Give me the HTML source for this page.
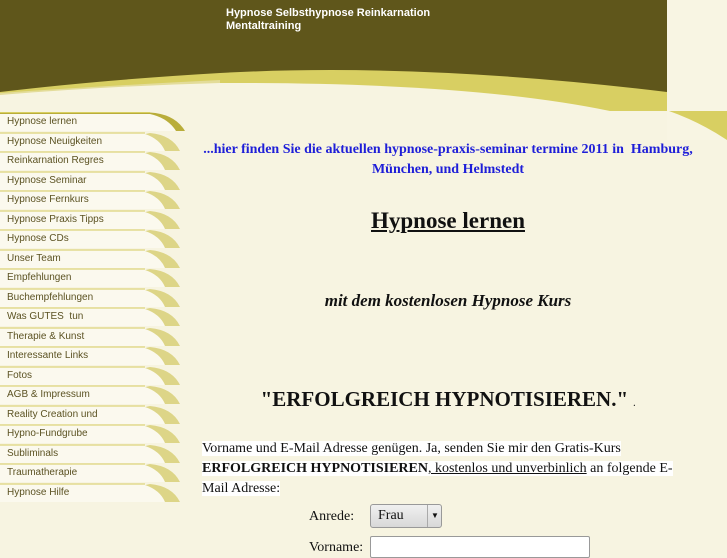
<!DOCTYPE html>
<html><head><meta charset="utf-8"><style>
body{margin:0;width:727px;height:545px;overflow:hidden;background:#f7f4e1;position:relative;font-family:"Liberation Serif",serif}
.hdr{position:absolute;left:0;top:0}
.nav{position:absolute;left:0;top:112px;width:190px}
.it{position:relative;height:19.5px;font:10px "Liberation Sans",sans-serif;color:#5b5222}
.it svg{position:absolute;left:0;top:0}
.it span{position:absolute;left:7px;top:4px}
.ab{position:absolute;font-weight:bold;color:#1e1ed8;font-size:14px;text-align:center;width:520px;left:188px;line-height:20px}
</style></head><body>
<svg class="hdr" width="727" height="140" viewBox="0 0 727 140">
<rect x="0" y="0" width="667" height="111" fill="#5f561b"/>
<rect x="667" y="0" width="60" height="140" fill="#f8f5e3"/>
<path d="M0 92 Q100 80 220 73 Q420 62 667 92 L667 111 L0 111Z" fill="#d8cf62"/>
<path d="M0 93 Q100 86 220 80 L220 111 L0 111Z" fill="#e3dc9a"/>
<path d="M0 95 Q110 86 220 83 Q470 82 610 111 L0 111Z" fill="#f7f4e1"/>
<path d="M669 111 L727 111 L727 140 Q700 122 669 111Z" fill="#d8cf62"/>
</svg>
<div style="position:absolute;left:226px;top:7px;font:bold 11px 'Liberation Sans',sans-serif;color:#fff;line-height:13px">Hypnose Selbsthypnose Reinkarnation<br>Mentaltraining</div>
<div class="nav">
<div class="it"><svg width="190" height="20"><path d="M0 0.5H150Q175 2 185 19H0Z" fill="#fbf9ee"/><path d="M0 0.5H150Q175 2 185 19H176Q168 6 150 2H0Z" fill="#b9ad3a"/><path d="M0 0.5H150" stroke="#d8cf62"/></svg><span>Hypnose lernen</span></div>
<div class="it"><svg width="190" height="20"><path d="M0 1H145Q170 3 180 19H0Z" fill="#fbf9ee"/><path d="M150 1Q172 3 180 19H165Q160 7 145 2Z" fill="#ddd587"/><path d="M0 1H145" stroke="#e2da8e" stroke-width="1.5"/></svg><span>Hypnose Neuigkeiten</span></div>
<div class="it"><svg width="190" height="20"><path d="M0 1H145Q170 3 180 19H0Z" fill="#fbf9ee"/><path d="M150 1Q172 3 180 19H165Q160 7 145 2Z" fill="#ddd587"/><path d="M0 1H145" stroke="#e2da8e" stroke-width="1.5"/></svg><span>Reinkarnation Regres</span></div>
<div class="it"><svg width="190" height="20"><path d="M0 1H145Q170 3 180 19H0Z" fill="#fbf9ee"/><path d="M150 1Q172 3 180 19H165Q160 7 145 2Z" fill="#ddd587"/><path d="M0 1H145" stroke="#e2da8e" stroke-width="1.5"/></svg><span>Hypnose Seminar</span></div>
<div class="it"><svg width="190" height="20"><path d="M0 1H145Q170 3 180 19H0Z" fill="#fbf9ee"/><path d="M150 1Q172 3 180 19H165Q160 7 145 2Z" fill="#ddd587"/><path d="M0 1H145" stroke="#e2da8e" stroke-width="1.5"/></svg><span>Hypnose Fernkurs</span></div>
<div class="it"><svg width="190" height="20"><path d="M0 1H145Q170 3 180 19H0Z" fill="#fbf9ee"/><path d="M150 1Q172 3 180 19H165Q160 7 145 2Z" fill="#ddd587"/><path d="M0 1H145" stroke="#e2da8e" stroke-width="1.5"/></svg><span>Hypnose Praxis Tipps</span></div>
<div class="it"><svg width="190" height="20"><path d="M0 1H145Q170 3 180 19H0Z" fill="#fbf9ee"/><path d="M150 1Q172 3 180 19H165Q160 7 145 2Z" fill="#ddd587"/><path d="M0 1H145" stroke="#e2da8e" stroke-width="1.5"/></svg><span>Hypnose CDs</span></div>
<div class="it"><svg width="190" height="20"><path d="M0 1H145Q170 3 180 19H0Z" fill="#fbf9ee"/><path d="M150 1Q172 3 180 19H165Q160 7 145 2Z" fill="#ddd587"/><path d="M0 1H145" stroke="#e2da8e" stroke-width="1.5"/></svg><span>Unser Team</span></div>
<div class="it"><svg width="190" height="20"><path d="M0 1H145Q170 3 180 19H0Z" fill="#fbf9ee"/><path d="M150 1Q172 3 180 19H165Q160 7 145 2Z" fill="#ddd587"/><path d="M0 1H145" stroke="#e2da8e" stroke-width="1.5"/></svg><span>Empfehlungen</span></div>
<div class="it"><svg width="190" height="20"><path d="M0 1H145Q170 3 180 19H0Z" fill="#fbf9ee"/><path d="M150 1Q172 3 180 19H165Q160 7 145 2Z" fill="#ddd587"/><path d="M0 1H145" stroke="#e2da8e" stroke-width="1.5"/></svg><span>Buchempfehlungen</span></div>
<div class="it"><svg width="190" height="20"><path d="M0 1H145Q170 3 180 19H0Z" fill="#fbf9ee"/><path d="M150 1Q172 3 180 19H165Q160 7 145 2Z" fill="#ddd587"/><path d="M0 1H145" stroke="#e2da8e" stroke-width="1.5"/></svg><span>Was GUTES &nbsp;tun</span></div>
<div class="it"><svg width="190" height="20"><path d="M0 1H145Q170 3 180 19H0Z" fill="#fbf9ee"/><path d="M150 1Q172 3 180 19H165Q160 7 145 2Z" fill="#ddd587"/><path d="M0 1H145" stroke="#e2da8e" stroke-width="1.5"/></svg><span>Therapie &amp; Kunst</span></div>
<div class="it"><svg width="190" height="20"><path d="M0 1H145Q170 3 180 19H0Z" fill="#fbf9ee"/><path d="M150 1Q172 3 180 19H165Q160 7 145 2Z" fill="#ddd587"/><path d="M0 1H145" stroke="#e2da8e" stroke-width="1.5"/></svg><span>Interessante Links</span></div>
<div class="it"><svg width="190" height="20"><path d="M0 1H145Q170 3 180 19H0Z" fill="#fbf9ee"/><path d="M150 1Q172 3 180 19H165Q160 7 145 2Z" fill="#ddd587"/><path d="M0 1H145" stroke="#e2da8e" stroke-width="1.5"/></svg><span>Fotos</span></div>
<div class="it"><svg width="190" height="20"><path d="M0 1H145Q170 3 180 19H0Z" fill="#fbf9ee"/><path d="M150 1Q172 3 180 19H165Q160 7 145 2Z" fill="#ddd587"/><path d="M0 1H145" stroke="#e2da8e" stroke-width="1.5"/></svg><span>AGB &amp; Impressum</span></div>
<div class="it"><svg width="190" height="20"><path d="M0 1H145Q170 3 180 19H0Z" fill="#fbf9ee"/><path d="M150 1Q172 3 180 19H165Q160 7 145 2Z" fill="#ddd587"/><path d="M0 1H145" stroke="#e2da8e" stroke-width="1.5"/></svg><span>Reality Creation und</span></div>
<div class="it"><svg width="190" height="20"><path d="M0 1H145Q170 3 180 19H0Z" fill="#fbf9ee"/><path d="M150 1Q172 3 180 19H165Q160 7 145 2Z" fill="#ddd587"/><path d="M0 1H145" stroke="#e2da8e" stroke-width="1.5"/></svg><span>Hypno-Fundgrube</span></div>
<div class="it"><svg width="190" height="20"><path d="M0 1H145Q170 3 180 19H0Z" fill="#fbf9ee"/><path d="M150 1Q172 3 180 19H165Q160 7 145 2Z" fill="#ddd587"/><path d="M0 1H145" stroke="#e2da8e" stroke-width="1.5"/></svg><span>Subliminals</span></div>
<div class="it"><svg width="190" height="20"><path d="M0 1H145Q170 3 180 19H0Z" fill="#fbf9ee"/><path d="M150 1Q172 3 180 19H165Q160 7 145 2Z" fill="#ddd587"/><path d="M0 1H145" stroke="#e2da8e" stroke-width="1.5"/></svg><span>Traumatherapie</span></div>
<div class="it"><svg width="190" height="20"><path d="M0 1H145Q170 3 180 19H0Z" fill="#fbf9ee"/><path d="M150 1Q172 3 180 19H165Q160 7 145 2Z" fill="#ddd587"/><path d="M0 1H145" stroke="#e2da8e" stroke-width="1.5"/></svg><span>Hypnose Hilfe</span></div>
</div>
<div class="ab" style="top:140px">...hier finden Sie die aktuellen hypnose-praxis-seminar termine 2011 in &nbsp;Hamburg,<br>München, und Helmstedt</div>
<div style="position:absolute;left:188px;width:520px;top:208px;text-align:center;font-weight:bold;font-size:23px;text-decoration:underline;color:#111">Hypnose lernen</div>
<div style="position:absolute;left:188px;width:520px;top:291px;text-align:center;font-weight:bold;font-style:italic;font-size:17px;color:#111">mit dem kostenlosen Hypnose Kurs</div>
<div style="position:absolute;left:188px;width:520px;top:387px;text-align:center;font-weight:bold;font-size:21px;color:#111">"ERFOLGREICH HYPNOTISIEREN." <span style="font-size:8px">.</span></div>
<div style="position:absolute;left:202px;top:439px;width:480px;font-size:14px;line-height:20px;color:#111"><span style="background:#fff">Vorname und E-Mail Adresse genügen. Ja, senden Sie mir den Gratis-Kurs <b>ERFOLGREICH HYPNOTISIEREN</b><u>, kostenlos und unverbinlich</u> an folgende E-Mail Adresse:</span></div>
<div style="position:absolute;left:309px;top:509px;font-size:14px;color:#111">Anrede:</div>
<div style="position:absolute;left:370px;top:504px;width:70px;height:22px;border:1px solid #999;border-radius:3px;background:linear-gradient(#f0f0f0,#d8d8d8);font-size:14px;color:#111"><span style="position:absolute;left:7px;top:3px">Frau</span><span style="position:absolute;left:56px;top:0;width:14px;height:22px;border-left:1px solid #aaa;font-size:8px;text-align:center;line-height:22px">▼</span></div>
<div style="position:absolute;left:309px;top:540px;font-size:14px;color:#111">Vorname:</div>
<div style="position:absolute;left:370px;top:536px;width:218px;height:20px;border:1px solid #999;border-radius:2px;background:#fff"></div>
</body></html>
